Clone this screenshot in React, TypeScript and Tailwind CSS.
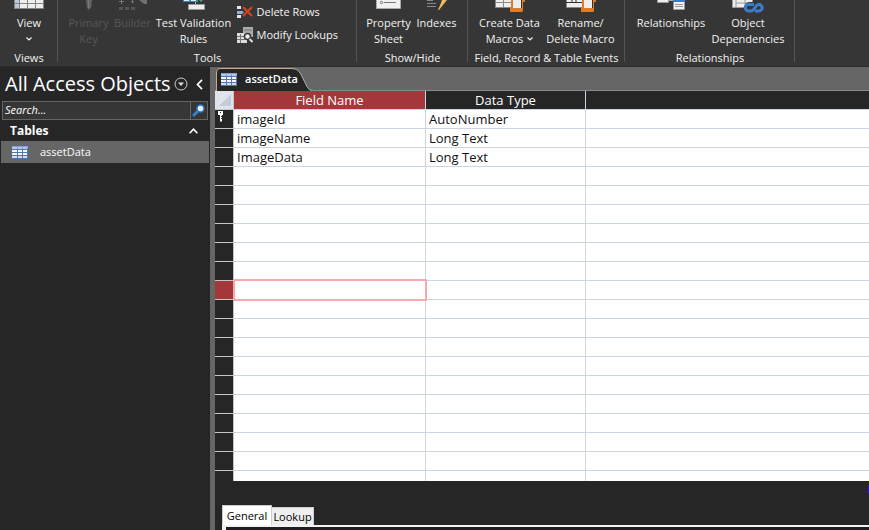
import type { ReactNode } from "react";

const fields = [
  { name: "imageId", type: "AutoNumber", key: true },
  { name: "imageName", type: "Long Text" },
  { name: "ImageData", type: "Long Text" },
];
const ROWS = 19;
const ACTIVE_ROW = 9;

function Chevron({ className = "" }: { className?: string }) {
  return (
    <svg className={className} width="6" height="4" viewBox="0 0 6 4" fill="none" stroke="currentColor" strokeWidth="1.2">
      <path d="M.5.5 3 3 5.500.5" />
    </svg>
  );
}

function BigButton({ icon, lines, width, disabled, arrow }: {
  icon: ReactNode; lines: string[]; width: string; disabled?: boolean; arrow?: "below" | "inline";
}) {
  return (
    <button type="button" disabled={disabled} className={`${width} flex shrink-0 flex-col items-center whitespace-nowrap leading-4 disabled:text-[#565656]`}>
      <span className="flex h-[15px] items-start">{icon}</span>
      {lines.map((line, i) => (
        <span key={line} className="flex items-center gap-1">
          {line}
          {arrow === "inline" && i === lines.length - 1 && <Chevron />}
        </span>
      ))}
      {arrow === "below" && <Chevron className="mt-1.5" />}
    </button>
  );
}

function Group({ label, width, children }: { label: string; width: string; children: ReactNode }) {
  return (
    <section aria-label={label} className={`${width} relative flex h-full shrink-0 flex-col`}>
      <div className="flex h-[50px] justify-center">{children}</div>
      <div className="text-center leading-4 whitespace-nowrap">{label}</div>
      <div className="absolute top-0 right-0 h-[62px] w-px bg-[#555]" />
    </section>
  );
}

function TableIcon() {
  return (
    <svg width="16" height="13" viewBox="0 0 16 13" shapeRendering="crispEdges">
      <path fill="#5574ad" d="M0 0h16v13H0z" />
      <path fill="#87a3d4" d="M0 0h16v3H0z" />
      <path fill="#f4f7fc" d="M0 4h5v2H0zM6 4h4v2H6zM11 4h4v2h-4zM0 7h5v2H0zM6 7h4v2H6zM11 7h4v2h-4z" />
      <path fill="#d0dcf1" d="M0 10h5v2H0zM6 10h4v2H6zM11 10h4v2h-4z" />
      <path fill="#b4c7e9" d="M0 1h5v2H0zM6 1h4v2H6zM11 1h4v2h-4z" />
    </svg>
  );
}

const viewIcon = (
  <svg width="30" height="9" viewBox="0 0 30 9" shapeRendering="crispEdges">
    <path fill="#858585" d="M0 0h30v9H0z" />
    <path fill="#b8c9dc" d="M1 0h4v3H1zM1 4h4v4H1z" />
    <path fill="#eee" d="M6 0h7v3H6zM14 0h7v3h-7zM22 0h7v3h-7zM6 4h7v4H6zM14 4h7v4h-7zM22 4h7v4h-7z" />
  </svg>
);
const keyIcon = (
  <svg width="8" height="10" viewBox="0 0 8 10">
    <path fill="#626262" d="M1 0h6v2L6 3l1 1-1 1 1 1-3 4-2-2z" />
    <path stroke="#7a7a7a" d="M3.500 0v8" />
  </svg>
);
const wandIcon = (
  <svg width="28" height="10" viewBox="0 0 28 10">
    <path stroke="#777" strokeWidth="1" d="M0 1.500h5M2.500 0v4M12 2h3M13.500 0v3" />
    <path fill="#707070" d="M20 0h8v4h-3z" />
    <path fill="#555" d="M0 7h4v3H0zM6 7h4v3H6zM12 7h4v3h-4z" />
  </svg>
);
const validationIcon = (
  <svg width="22" height="10" viewBox="0 0 22 10">
    <path fill="#3b83c8" d="M0 0h15v2H0z" />
    <path fill="#eee" d="M1 0h5v1H1zM8 0h5v1H8z" />
    <path stroke="#bbb" d="M12.500 2v3" />
    <path fill="#eee" stroke="#999" d="M5.500 4.500h16v5h-16z" />
    <path fill="#44a564" d="M16 0h4l-2 2z" />
  </svg>
);
const propertyIcon = (
  <svg width="25" height="9" viewBox="0 0 25 9">
    <path fill="#f0f0f0" stroke="#aaa" d="M.5-1h24v9.500H.5z" />
    <circle cx="5.500" cy="2.500" r="1.200" fill="none" stroke="#777" />
    <path stroke="#777" d="M8 2.500h12" />
  </svg>
);
const indexIcon = (
  <svg width="20" height="10" viewBox="0 0 20 10">
    <path stroke="#8a8a8a" d="M0 .5h6M0 3.500h9M0 6.500h9" />
    <path fill="#edbd5c" d="M15 0h5l-8 10h-1l3-7z" />
  </svg>
);
function MacroIcon({ renamed }: { renamed?: boolean }) {
  return (
    <svg width="30" height="13" viewBox="0 0 30 13">
      <path fill="#eee" stroke="#888" d="M.5-1h16v8.500H.5z" />
      {renamed ? <path stroke="#333" d="M0 2.500h17M6 0v2M10 0v2" /> : <path stroke="#888" d="M0 2.500h17M8.500 0v8" />}
      <path fill="#e07b28" d="M16 0h2v8h9V0h3v2h-2v9l-1 1H15V8h1z" />
      <path fill="#eee" d="M18 0h8v8h-8z" />
    </svg>
  );
}
const relationIcon = (
  <svg width="28" height="10" viewBox="0 0 28 10">
    <path fill="#eee" stroke="#999" d="M.5-1h11v3.500H.5z" />
    <path stroke="#aaa" d="M12 .5h4" />
    <path fill="#f2f2f2" stroke="#999" d="M16.500-1h11v10.500h-11z" />
    <path fill="#3b7cc8" d="M16 0h12v2H16z" />
    <path stroke="#999" d="M18 4.500h8M18 6.500h8" />
  </svg>
);
const dependencyIcon = (
  <svg width="32" height="13" viewBox="0 0 32 13">
    <path fill="#eee" stroke="#999" d="M.5-1h20v8.500H.5zM4 0v8M13 0v4M4 3h17" />
    <rect x="14" y="4" width="16" height="7" rx="3.500" fill="#363636" stroke="#363636" strokeWidth="4" />
    <path fill="none" stroke="#3b7dca" strokeWidth="3" d="M22 4.500h-5.500a3.200 3.200 0 0 0 0 6.400H19q2 0 4-3.200t4-3.200a3.200 3.200 0 0 1 0 6.400H23" />
  </svg>
);

function Ribbon() {
  return (
    <header className="flex h-[67px] shrink-0 overflow-hidden border-b border-[#2b2b2b] bg-[#363636] text-[11px] text-[#f3f3f3]">
      <Group label="Views" width="w-[58px]">
        <BigButton icon={viewIcon} lines={["View"]} width="w-14" arrow="below" />
      </Group>
      <Group label="Tools" width="w-[299px]">
        <BigButton icon={keyIcon} lines={["Primary", "Key"]} width="w-12" disabled />
        <BigButton icon={wandIcon} lines={["Builder"]} width="w-10" disabled />
        <BigButton icon={validationIcon} lines={["Test Validation", "Rules"]} width="w-[82px]" />
        <div className="flex w-[116px] flex-col gap-[7px] pt-1 pl-0.5 leading-4">
          <button type="button" className="flex items-center gap-1 whitespace-nowrap">
            <svg width="16" height="14" viewBox="0 0 16 14">
              <path fill="#e8e8e8" d="M0 1h4v3H0zM0 10h4v3H0z" />
              <path fill="#8bb4dd" d="M0 6h5l2 1-2 2H0z" />
              <path stroke="#d4421d" strokeWidth="2.200" d="m6 2 9 9M15 2l-9 9" />
            </svg>
            Delete Rows
          </button>
          <button type="button" className="flex items-center gap-1 whitespace-nowrap">
            <svg width="16" height="16" viewBox="0 0 16 16">
              <path fill="#aaa" d="M6 0h10v10H6z" />
              <path fill="#ddd" d="M0 6h10v10H0z" />
              <path stroke="#777" d="M0 9.500h8M0 12.500h8M3.500 7v9M7 3h8" />
              <circle cx="10.500" cy="9.500" r="3" fill="#eee" stroke="#333" strokeWidth="1.500" />
              <path stroke="#ddd" strokeWidth="2" d="m12.500 12 3 3" />
            </svg>
            Modify Lookups
          </button>
        </div>
      </Group>
      <Group label="Show/Hide" width="w-[111px]">
        <BigButton icon={propertyIcon} lines={["Property", "Sheet"]} width="w-12" />
        <BigButton icon={indexIcon} lines={["Indexes"]} width="w-12" />
      </Group>
      <Group label="Field, Record & Table Events" width="w-[157px]">
        <BigButton icon={<MacroIcon />} lines={["Create Data", "Macros"]} width="w-[68px]" arrow="inline" />
        <BigButton icon={<MacroIcon renamed />} lines={["Rename/", "Delete Macro"]} width="w-[74px]" />
      </Group>
      <Group label="Relationships" width="w-[170px]">
        <BigButton icon={relationIcon} lines={["Relationships"]} width="w-[76px]" />
        <BigButton icon={dependencyIcon} lines={["Object", "Dependencies"]} width="w-[78px]" />
      </Group>
    </header>
  );
}

function NavPane() {
  return (
    <nav className="w-[210px] shrink-0 bg-[#262626] text-white">
      <div className="flex h-[34px] items-center pl-[5px]">
        <h1 className="w-[169px] text-[20px] leading-8 whitespace-nowrap">All Access Objects</h1>
        <button type="button" aria-label="Filter objects">
          <svg width="14" height="14" viewBox="0 0 14 14">
            <circle cx="7" cy="7" r="6" fill="none" stroke="#ccc" />
            <path fill="#ddd" d="M4 5.500h6L7 9z" />
          </svg>
        </button>
        <button type="button" aria-label="Collapse pane" className="ml-2">
          <svg width="7" height="11" viewBox="0 0 7 11" fill="none" stroke="#fff" strokeWidth="1.700"><path d="M6 .8 1.500 5.500 6 10.200" /></svg>
        </button>
      </div>
      <div className="mr-0.5 ml-0.5 flex h-[19px] border border-[#666] bg-[#363636]">
        <input aria-label="Search" placeholder="Search..." className="min-w-0 flex-1 px-0.5 text-[11px] italic outline-none placeholder:text-white" />
        <button type="button" aria-label="Run search" className="flex w-[17px] items-center justify-center border-l border-[#666]">
          <svg width="14" height="13" viewBox="0 0 14 13">
            <path stroke="#3181cf" strokeWidth="3" strokeLinecap="round" d="m2 11 4-4" />
            <circle cx="8.500" cy="4.500" r="3.500" fill="#e5f2ff" stroke="#2f77c5" strokeWidth="1.500" />
          </svg>
        </button>
      </div>
      <button type="button" className="flex h-[21px] w-full items-center justify-between pr-3 pl-2.5 text-[12px] font-bold">
        Tables
        <svg width="9" height="6" viewBox="0 0 9 6" fill="none" stroke="#fff" strokeWidth="1.600"><path d="M.6 5.200 4.500 1.200 8.400 5.200" /></svg>
      </button>
      <button type="button" className="mx-px flex h-[22px] w-[208px] items-center gap-3 bg-[#666] pl-[11px] text-[11px]">
        <TableIcon />
        assetData
      </button>
    </nav>
  );
}

function DesignGrid() {
  return (
    <div className="h-[390px] overflow-hidden bg-white">
      <table className="w-full table-fixed border-separate border-spacing-0 text-left text-[13px] leading-[18px] text-[#111]">
        <colgroup>
          <col className="w-[19px]" />
          <col className="w-48" />
          <col className="w-40" />
          <col />
        </colgroup>
        <thead>
          <tr className="h-[19px] text-center text-white">
            <th aria-label="Select all" className="border-r border-b border-[#c6c6c6] bg-[#e0e4ea] p-0">
              <svg className="ml-1 block" width="12" height="12" viewBox="0 0 12 12"><path fill="#c3ccd7" d="M12 0v12H0z" /></svg>
            </th>
            <th className="border-r border-b border-[#ccd5e2] bg-[#a4373a] p-0 font-normal">Field Name</th>
            <th className="border-r border-b border-[#ccd5e2] bg-[#262626] p-0 font-normal">Data Type</th>
            <th aria-label="Description" className="border-b border-[#ccd5e2] bg-[#262626] p-0" />
          </tr>
        </thead>
        <tbody>
          {Array.from({ length: ROWS + 1 }, (_, i) => {
            const f = fields[i];
            const active = i === ACTIVE_ROW;
            return (
              <tr key={i} className="h-[19px]">
                <td className={`border-r border-b border-[#c6c6c6] p-0 align-top ${active ? "bg-[#a4373a]" : "bg-[#262626]"}`}>
                  {f?.key && (
                    <svg className="ml-[3px] block" width="6" height="12" viewBox="0 0 6 12">
                      <path fill="#fff" d="M0 1h5v4H4v6L3 12 2 11V5H0z" />
                      <path fill="#262626" d="M2 2h1v1H2zM3 6h1v1H3zM3 8h1v1H3z" />
                    </svg>
                  )}
                </td>
                <td className={`border-r border-b border-[#ccd5e2] py-0 pr-0 pl-[3px] ${active ? "relative" : ""}`}>
                  {f?.name}
                  {active && <span className="absolute -top-0.5 -right-0.5 -bottom-0.5 -left-px border-2 border-[#f7a8ab]" />}
                </td>
                <td className="border-r border-b border-[#ccd5e2] py-0 pr-0 pl-[3px]">{f?.type}</td>
                <td className="border-b border-[#ccd5e2] p-0" />
              </tr>
            );
          })}
        </tbody>
      </table>
    </div>
  );
}

export default function App() {
  return (
    <div className="flex h-screen min-w-0 flex-col overflow-hidden bg-[#262626] font-['Open_Sans','Noto_Sans',sans-serif]">
      <Ribbon />
      <div className="flex min-h-0 flex-1">
        <NavPane />
        <div className="w-[5px] shrink-0 bg-[#666]" />
        <main className="flex min-w-0 flex-1 flex-col bg-[#262626]">
          <div className="relative h-6 shrink-0 border-b border-[#868b94] bg-[#666]">
            <svg className="absolute top-0 left-0" width="98" height="24" viewBox="0 0 98 24">
              <path fill="#262626" d="M1 24V6q0-4 4-4h73q5 0 8 6l6 12q2 4 5 4z" />
              <path fill="none" stroke="#cda888" d="M1.500 24V6q0-4.500 4-4.500h72" />
              <path fill="none" stroke="#aaa" d="M77 1.500q6 0 9 6l6 12q2 4 5 4" />
            </svg>
            <button type="button" className="relative flex h-6 items-center gap-2 pl-1.5 text-[11px] font-semibold text-white">
              <TableIcon />
              assetData
            </button>
          </div>
          <DesignGrid />
          <div className="relative flex flex-1 flex-col pt-6 pl-[7px]">
            <div className="absolute top-1 right-0 h-2 w-px bg-[#2a20b0]" />
            <div className="flex h-5 shrink-0 items-end text-[11px] leading-4 text-black">
              <button type="button" className="h-5 w-[50px] border border-[#ccc] border-b-0 bg-white whitespace-nowrap">General</button>
              <button type="button" className="h-[18px] w-[42px] border-t border-r border-[#ccc] bg-[#efefef] whitespace-nowrap">Lookup</button>
            </div>
            <div className="flex-1 border-t-2 border-l-4 border-[#f4f1f4] bg-[#211c20]" />
          </div>
        </main>
      </div>
    </div>
  );
}
